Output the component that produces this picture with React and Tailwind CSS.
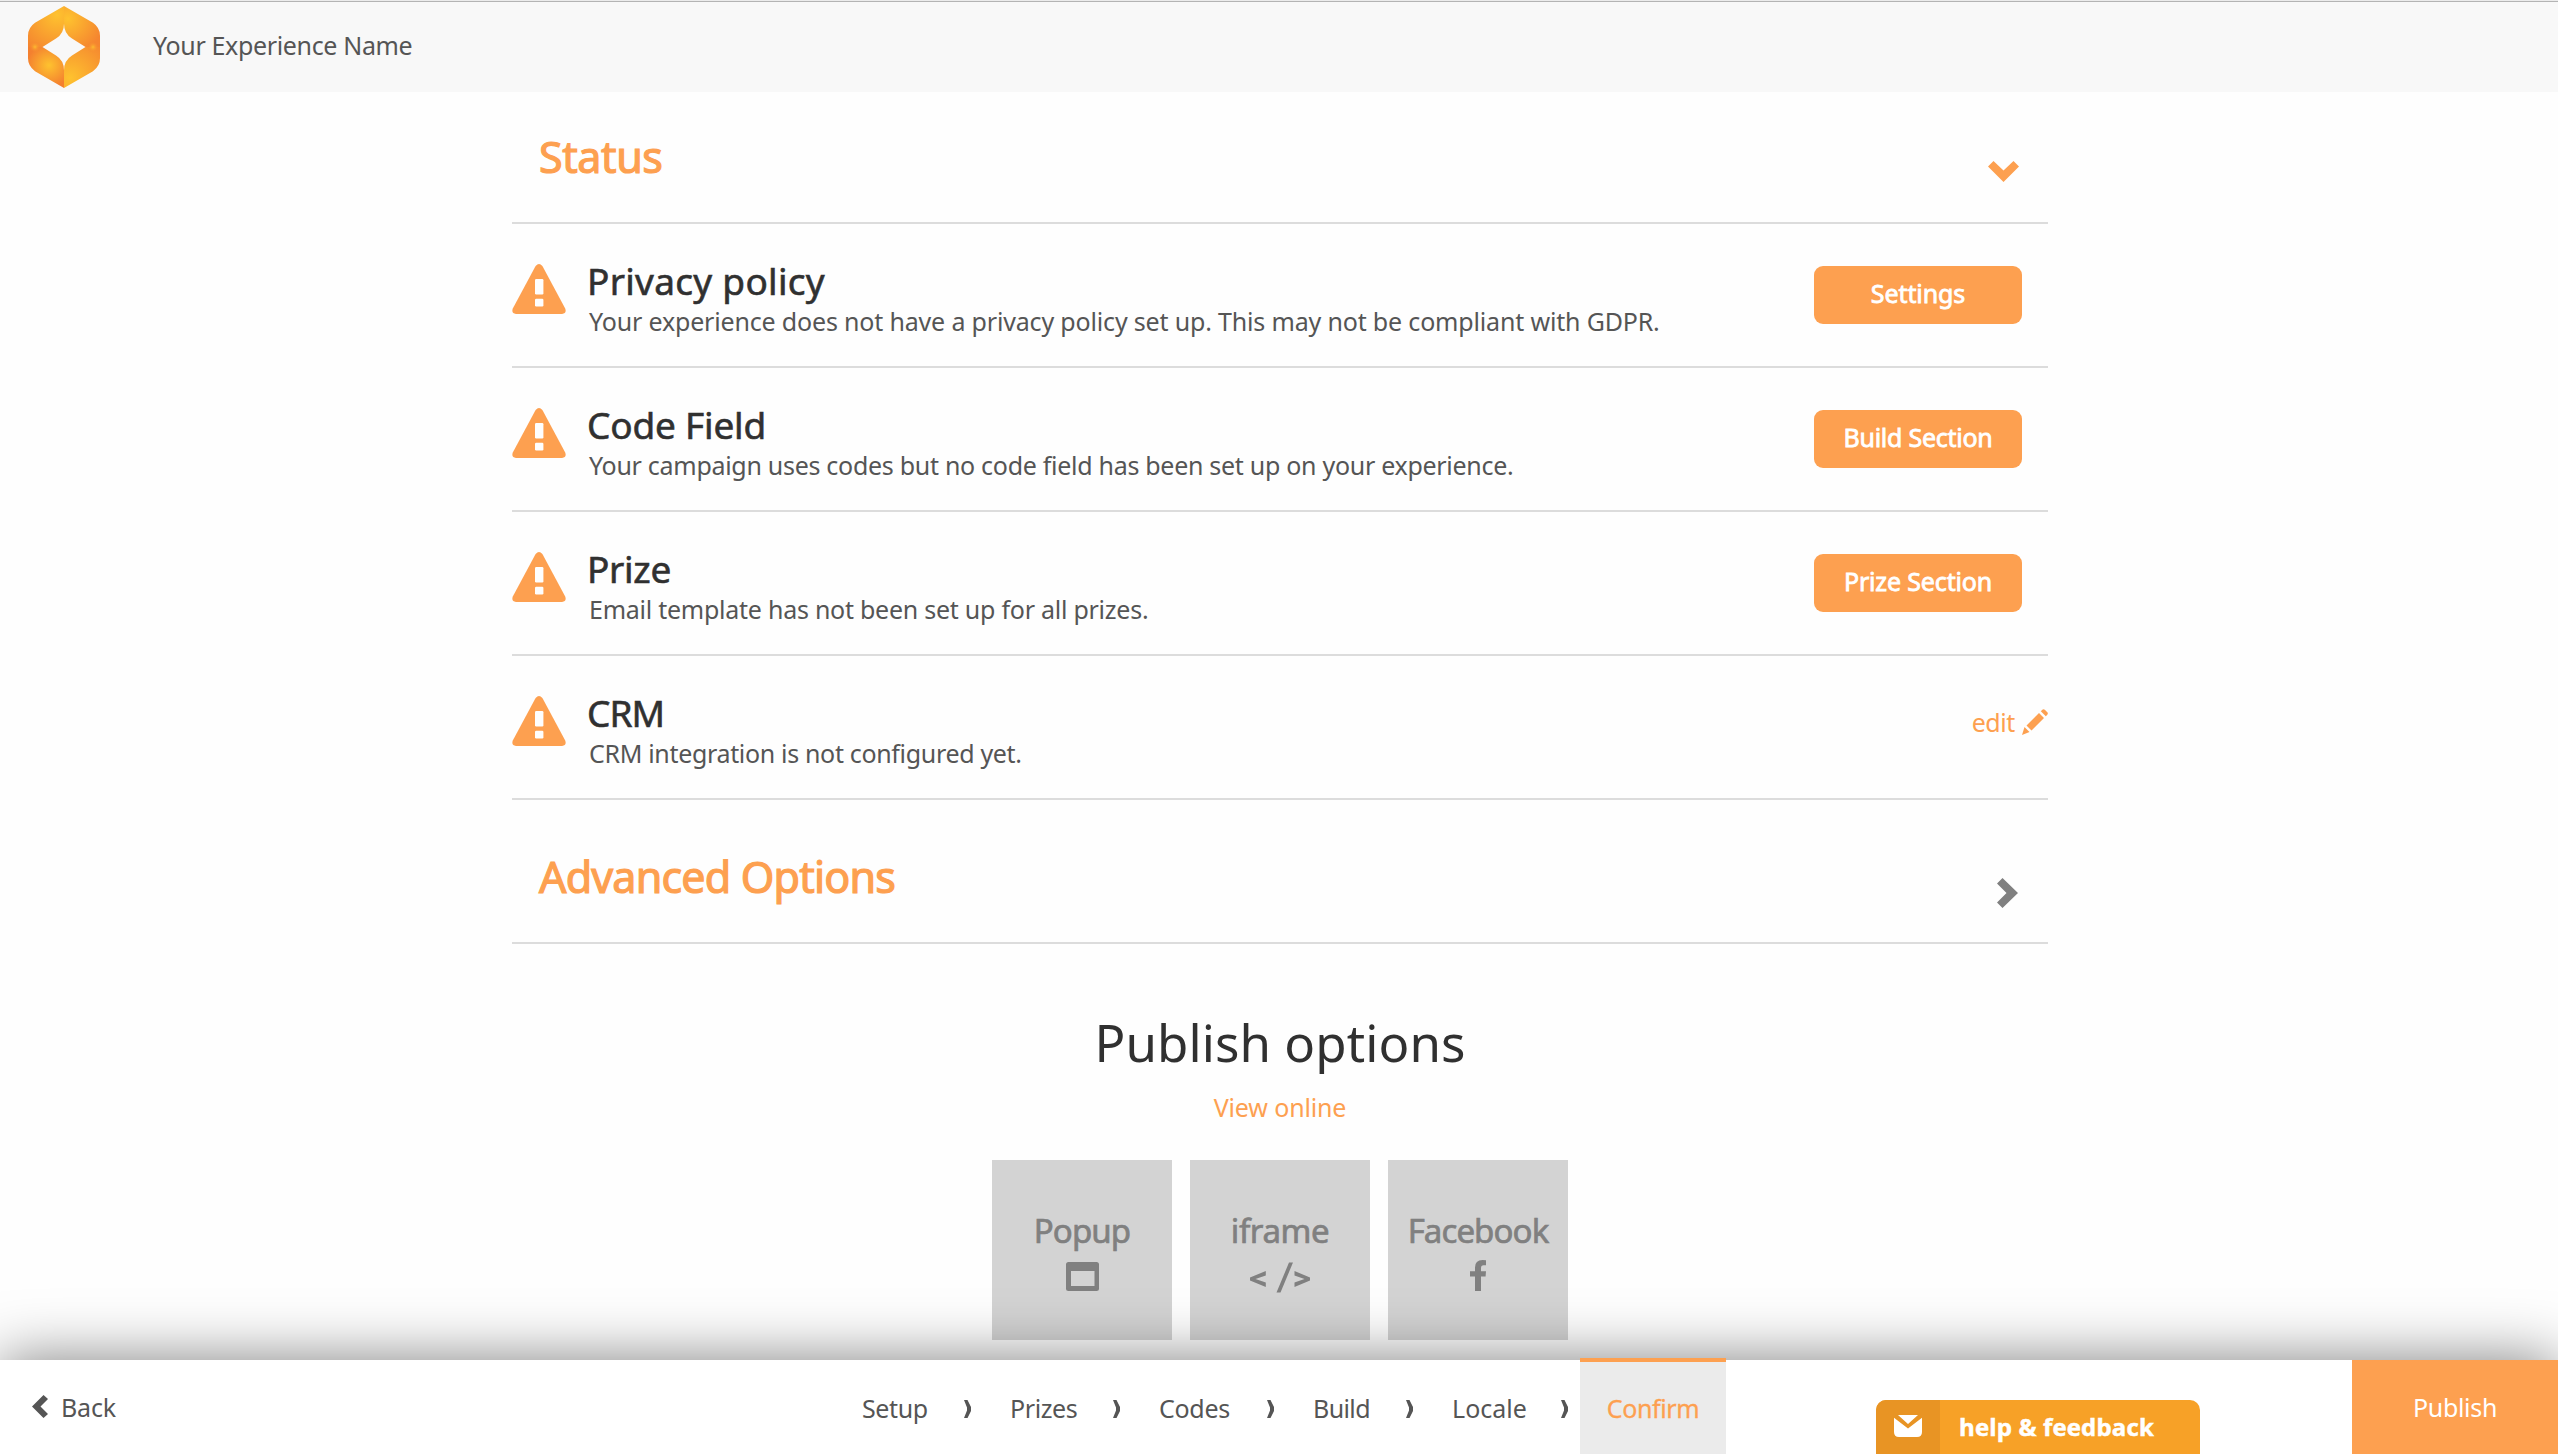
import React from "react";

const rows = [
  { title: "Privacy policy", titleCls: "tracking-[0.29px]", text: "Your experience does not have a privacy policy set up. This may not be compliant with GDPR.", textCls: "tracking-[-0.17px]", button: "Settings", buttonCls: "tracking-[-0.1px]" },
  { title: "Code Field", titleCls: "tracking-[-0.19px]", text: "Your campaign uses codes but no code field has been set up on your experience.", textCls: "tracking-[-0.29px]", button: "Build Section", buttonCls: "tracking-[-0.25px]" },
  { title: "Prize", titleCls: "tracking-[-0.29px]", text: "Email template has not been set up for all prizes.", textCls: "tracking-[-0.25px]", button: "Prize Section", buttonCls: "tracking-[-0.15px]" },
  { title: "CRM", titleCls: "tracking-[-0.99px]", text: "CRM integration is not configured yet.", textCls: "tracking-[-0.33px]" },
];

const steps = [
  { label: "Setup", cls: "w-[102px] tracking-[-0.4px]" },
  { label: "Prizes", cls: "w-[103px] tracking-[-0.4px]" },
  { label: "Codes", cls: "w-[108px] tracking-[-0.28px]" },
  { label: "Build", cls: "w-[93px] tracking-[-0.6px]" },
  { label: "Locale", cls: "w-[109px] tracking-[0.03px]" },
];
const stepGaps = ["w-[46px]", "w-[46px]", "w-[46px]", "w-[46px]", "w-[19px]"];

function Logo() {
  return (
    <svg className="block h-[82px] w-[72px]" viewBox="0 0 72 83" preserveAspectRatio="none">
      <defs>
        <radialGradient id="lg1" gradientUnits="userSpaceOnUse" cx="29" cy="9" r="42">
          <stop offset="0" stopColor="#fec22f" /><stop offset="1" stopColor="#f5852f" />
        </radialGradient>
        <radialGradient id="lg2" gradientUnits="userSpaceOnUse" cx="40" cy="13" r="36">
          <stop offset="0" stopColor="#fec22f" /><stop offset="1" stopColor="#f5852f" />
        </radialGradient>
        <radialGradient id="lg3" gradientUnits="userSpaceOnUse" cx="21" cy="60" r="22">
          <stop offset="0" stopColor="#fec22f" /><stop offset="1" stopColor="#f4802f" />
        </radialGradient>
        <radialGradient id="lg4" gradientUnits="userSpaceOnUse" cx="42" cy="73" r="46">
          <stop offset="0" stopColor="#fec22f" /><stop offset="1" stopColor="#f5852f" />
        </radialGradient>
        <radialGradient id="lg5">
          <stop offset="0" stopColor="#fdbb2f" /><stop offset="1" stopColor="#f4802f" stopOpacity="0" />
        </radialGradient>
      </defs>
      <path fill="url(#lg1)" d="M36 0 7 17Q0 22 0 30V41.500H14.500L28 33Q36 28 36 18Z" />
      <path fill="url(#lg2)" d="M36 0 65 17Q72 22 72 30V41.500H57.500L44 33Q36 28 36 18Z" />
      <path fill="url(#lg3)" d="M36 83 7 66Q0 61 0 53V41.500H14.500L28 50Q36 55 36 65Z" />
      <path fill="url(#lg4)" d="M36 83 65 66Q72 61 72 53V41.500H57.500L44 50Q36 55 36 65Z" />
      <circle cx="7" cy="41.500" r="6" fill="url(#lg5)" />
      <circle cx="65" cy="41.500" r="6" fill="url(#lg5)" />
    </svg>
  );
}

function Warning() {
  return (
    <svg className="mt-[40px] block h-[50px] w-[54px] shrink-0" viewBox="0 0 54 50">
      <path fill="#fda050" d="M23.600 2Q27-2 30.400 2L53.200 44.500Q55 49.500 50 50H4Q-1 49.500.8 44.500Z" />
      <rect x="23" y="15" width="8.400" height="15.500" rx="1.200" fill="#fefefe" />
      <rect x="23" y="34.800" width="8.400" height="7.600" rx="1.200" fill="#fefefe" />
    </svg>
  );
}

function Tile({ label, cls, children }) {
  return (
    <div className="flex h-[180px] w-[180px] flex-col items-center bg-[#d3d3d3] pt-[51px] text-[#808080]">
      <div className={"text-[33px] leading-[40px] [-webkit-text-stroke:0.7px] " + cls}>{label}</div>
      {children}
    </div>
  );
}

export default function App() {
  return (
    <div className="flex h-[1454px] w-full flex-col overflow-hidden bg-[#fefefe] font-['Noto_Sans',sans-serif] text-[25px] leading-[30px] text-[#555]">
      <div className="h-px bg-[#ececec]" />
      <header className="flex h-[91px] items-start border-t border-[#b4b4b4] bg-[#f8f8f8] pl-[28px]">
        <div className="pt-[4px]"><Logo /></div>
        <div className="ml-[53px] mt-[28px] whitespace-nowrap tracking-[-0.35px]">Your Experience Name</div>
      </header>

      <main className="ml-[512px] flex w-[1536px] flex-1 flex-col">
        <section className="flex h-[132px] items-center justify-between border-b-2 border-[#dcdcdc] pl-[27px] pr-[29px]">
          <h2 className="text-[43px] leading-[60px] tracking-[-0.4px] text-[#fda050] [-webkit-text-stroke:1.2px]">Status</h2>
          <svg className="mt-[28px] h-[21px] w-[31px]" viewBox="0 0 31 21"><path fill="#fda050" d="M5.500 0 15.500 9.500 25.500 0 31 5.500 15.500 21 0 5.500Z" /></svg>
        </section>

        {rows.map((r) => (
          <section key={r.title} className="flex h-[144px] items-start border-b-2 border-[#dcdcdc]">
            <Warning />
            <div className="ml-[21px] flex-1 whitespace-nowrap pt-[36px]">
              <h3 className={"text-[37px] leading-[41px] text-[#303030] [-webkit-text-stroke:0.6px] " + r.titleCls}>{r.title}</h3>
              <p className={"ml-[2px] leading-[40px] " + r.textCls}>{r.text}</p>
            </div>
            {r.button ? (
              <button className={"mr-[26px] mt-[42px] h-[58px] w-[208px] rounded-[9px] bg-[#fda050] pb-[4px] text-white [-webkit-text-stroke:0.8px] " + r.buttonCls}>{r.button}</button>
            ) : (
              <a className="mt-[51px] flex items-start gap-[7px] text-[#fda050]">
                <span className="tracking-[-0.4px]">edit</span>
                <svg className="mt-[2px] h-[26px] w-[26px]" viewBox="0 0 26 26">
                  <path fill="#fda050" d="M0 26 2.500 18 7.500 23ZM4.500 16.500 17 4 22 9 9.500 21.500ZM18.800 2.300 20.300.8Q21.500-.5 22.800.8L25.300 3.300Q26.400 4.500 25.300 5.700L23.800 7.200Z" />
                </svg>
              </a>
            )}
          </section>
        ))}

        <section className="flex h-[144px] items-center justify-between border-b-2 border-[#dcdcdc] pl-[27px] pr-[30px] pt-[11px]">
          <h2 className="text-[43px] leading-[60px] tracking-[-0.8px] text-[#fda050] [-webkit-text-stroke:1.2px]">Advanced Options</h2>
          <svg className="mt-[33px] h-[30px] w-[21px]" viewBox="0 0 21 30"><path fill="#808080" d="M5.500 0 21 15 5.500 30 0 24.500 9.500 15 0 5.500Z" /></svg>
        </section>

        <section className="flex flex-col items-center pt-[68px]">
          <h1 className="text-[51px] leading-[60px] tracking-[0.08px] text-[#303030]">Publish options</h1>
          <a className="mt-[15px] leading-[40px] tracking-[-0.15px] text-[#fda050]">View online</a>
          <div className="mt-[33px] flex gap-[18px]">
            <Tile label="Popup" cls="tracking-[-0.9px]">
              <svg className="mt-[11px] h-[29px] w-[33px]" viewBox="0 0 33 29"><path fill="#808080" fillRule="evenodd" d="M2.500 0H30.500Q33 0 33 2.500V26.500Q33 29 30.500 29H2.500Q0 29 0 26.500V2.500Q0 0 2.500 0ZM5 9V24H28.500V9Z" /></svg>
            </Tile>
            <Tile label="iframe" cls="tracking-[-0.4px]">
              <svg className="mt-[11px] h-[31px] w-[60px]" viewBox="0 0 60 31"><path fill="#808080" d="M15.800 9V13.500L5.500 17 15.800 20.500V25L0 18.500V15.500ZM44.500 9V13.500L54.500 17 44.500 20.500V25L60 18.500V15.500ZM39 .5H43L30.500 30.500H26.500Z" /></svg>
            </Tile>
            <Tile label="Facebook" cls="tracking-[-0.9px]">
              <svg className="mt-[9px] h-[31px] w-[17px]" viewBox="0 0 17 31"><path fill="#808080" d="M16 .3V5.200H13.500Q11 5.200 11 8V11.200H16L15.600 16.600H11V31H5V16.600H0V11.200H5V7.500Q5 0 12.500 0Q15 0 16 .3Z" /></svg>
            </Tile>
          </div>
        </section>
      </main>

      <footer className="relative flex h-[94px] shrink-0 items-start bg-white shadow-[0_0_60px_rgba(0,0,0,0.5)]">
        <div className="flex w-[862px] items-start pl-[32px] pt-[32px]">
          <svg className="mt-[3px] h-[23px] w-[16px]" viewBox="0 0 16 23"><path fill="#555" d="M11.500 0 0 11.500 11.500 23 16 19 8.500 11.500 16 4Z" /></svg>
          <span className="ml-[13px] tracking-[-0.16px]">Back</span>
        </div>
        <nav className="flex items-start pt-[33px]">
          {steps.map((s, i) => (
            <div key={s.label} className="flex">
              <span className={s.cls}>{s.label}</span>
              <span className={stepGaps[i]}>
                <svg className="mt-[7px] h-[18px] w-[7px]" viewBox="0 0 7 18"><path fill="#555" d="M0 0H3.500L7 7V11L3.500 18H0L3 10.500V7.500Z" /></svg>
              </span>
            </div>
          ))}
        </nav>
        <div className="-mt-[2px] h-[96px] w-[146px] border-t-4 border-[#fda050] bg-[#ebebeb] pt-[31px] text-center tracking-[-0.4px] text-[#fda050] [-webkit-text-stroke:0.3px]">Confirm</div>
        <button className="ml-auto h-[94px] w-[206px] bg-[#fda050] tracking-[-0.3px] text-white">Publish</button>
        <div className="absolute left-[1876px] top-[40px] flex h-[54px] w-[324px] overflow-hidden rounded-t-[10px] bg-[#f7a127] font-['Open_Sans',sans-serif] text-[24px] font-bold text-white">
          <div className="w-[64px] bg-[#e89424] pl-[18px] pt-[15px]">
            <svg className="block h-[22px] w-[28px]" viewBox="0 0 28 22"><path fill="#fff" d="M4 0H24L14 9ZM0 2.800 14 13.500 28 2.800V17Q28 22 23 22H5Q0 22 0 17Z" /></svg>
          </div>
          <div className="whitespace-nowrap pl-[19px] pt-[12px] tracking-[0.15px] [-webkit-text-stroke:0.5px]">help &amp; feedback</div>
        </div>
      </footer>
    </div>
  );
}
